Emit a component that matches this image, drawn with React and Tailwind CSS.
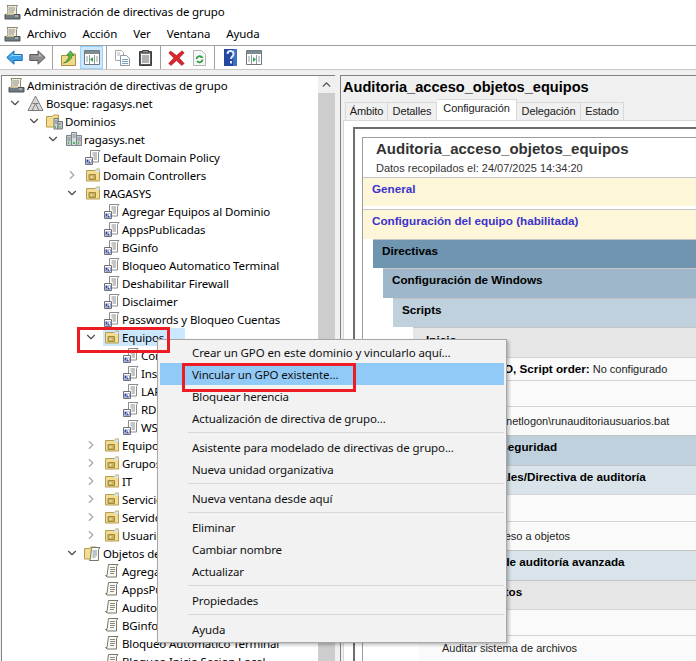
import React from "react";
import { ChevronDown, ChevronRight, ChevronUp } from "lucide-react";

const uiFont = { fontFamily: '"Noto Sans", sans-serif' };
const reportFont = { fontFamily: '"Liberation Sans", sans-serif' };

// small pictures from the MMC toolbar and the tree
const AppIcon = () => (
  <svg width="17" height="17" viewBox="0 0 17 17">
    <path d="M3 1.500h10.500l-1 2v7h-9.500l.8-2V3z" fill="#f3ecd6" stroke="#8a8a7a" />
    <path d="M5 4h6M5 6h6M5 8h5" stroke="#8f8f8f" />
    <path d="M1 10.500h15v4.500H1z" fill="#6f7b80" stroke="#4b5356" />
    <path d="M2 9.500h8v1.500H2z" fill="#c6b98a" />
    <path d="M11 12h3" stroke="#d8e0e2" />
  </svg>
);

const LinkIcon = () => (
  <svg width="16" height="16" viewBox="0 0 16 16">
    <path d="M5.500 1.500H15l-1.500 2v9.500H4.500l1-2z" fill="#fff" stroke="#8c8c8c" />
    <path d="M7.500 4h4.500M7.500 6h4.500M8.500 8h3.500M8.500 10h3.500" stroke="#8a8a8a" />
    <path d="M.5 8.500h7v7h-7z" fill="#fff" stroke="#6f7275" />
    <path d="M1.500 10.500h5v4h-5z" fill="#34449f" />
    <path d="M2.500 14l2.500-2.500M3 11h2.500v2.500" stroke="#fff" fill="none" />
  </svg>
);

const ScriptIcon = () => (
  <svg width="16" height="16" viewBox="0 0 16 16">
    <path d="M4.500 1.500H14l-1.500 2v10.500h-9.500l-1.500-1.500h1.500z" fill="#fbfaf2" stroke="#77776c" />
    <path d="M6 4.500h5M6 6.500h5M6 8.500h5M6 10.500h4" stroke="#8a8a80" />
  </svg>
);

const OuIcon = () => (
  <svg width="16" height="16" viewBox="0 0 16 16">
    <path d="M1.500 3.500h9l1-1.500h3v12h-13z" fill="#f4dc90" stroke="#b59c50" />
    <path d="M10.500 2.500h4v2.500h-4z" fill="#cfe4f4" />
    <path d="M4 7.500h6.500v5H4z" fill="#c9b25c" stroke="#a08a40" />
    <path d="M5.500 10h2" stroke="#fff" />
  </svg>
);

const ForestIcon = () => (
  <svg width="17" height="17" viewBox="0 0 17 17">
    <path d="M8.500 1L16 15.500H1z" fill="#d9d9d9" stroke="#7c7c7c" />
    <path d="M8.500 8.500L5 15.500M8.500 8.500L12 15.500M5.500 8.500h6" stroke="#7c7c7c" fill="none" />
  </svg>
);

const ServerIcon = () => (
  <svg width="16" height="16" viewBox="0 0 16 16">
    <path d="M5.500 1.500h5v13h-5z" fill="#d5dadd" stroke="#7d8589" />
    <path d="M.5 4.500h5v10h-5zM10.500 4.500h5v10h-5z" fill="#c3cacd" stroke="#7d8589" />
    <path d="M6.500 4h3M6.500 6h3M1.500 7h3M11.500 7h3M1.500 9h3M11.500 9h3" stroke="#7d8589" />
    <path d="M2 12h1M7 12h2M12 12h1" stroke="#47c04a" strokeWidth="2" />
  </svg>
);

const DomainsIcon = () => (
  <svg width="17" height="17" viewBox="0 0 17 17">
    <path d="M.5 3.500h6l1-1.500h5v12H.5z" fill="#f4dc90" stroke="#b59c50" />
    <path d="M8 5.500h4v10.500H8z" fill="#d5dadd" stroke="#6f777b" />
    <path d="M12 8.500h4.500v7.500H12z" fill="#c3cacd" stroke="#6f777b" />
    <path d="M9 8h2M9 10h2M13 11h2" stroke="#6f777b" />
    <path d="M9 14h1M13.500 14h1" stroke="#47c04a" strokeWidth="2" />
  </svg>
);

const GpoFolderIcon = () => (
  <svg width="17" height="17" viewBox="0 0 17 17">
    <path d="M.5 3.500h5l1-1.500h6v12H.5z" fill="#f4dc90" stroke="#b59c50" />
    <path d="M7.500 2.500H16l-1.500 2v11H5.500l1-2z" fill="#fbfaf2" stroke="#77776c" />
    <path d="M8.500 6h4.500M8.500 8h4.500M8.500 10h4.500M8.500 12h3" stroke="#7d8ea0" />
  </svg>
);

const BackIcon = () => (
  <svg width="17" height="15" viewBox="0 0 17 15">
    <path d="M.8 7.500L8 .8v3.700h8.200v6H8v3.700z" fill="#3ba3e8" stroke="#1b6fb0" />
    <path d="M3 7.500L7 4v2h8v-1H8" fill="#9ddcfb" />
  </svg>
);

const ForwardIcon = () => (
  <svg width="17" height="15" viewBox="0 0 17 15">
    <path d="M16.200 7.500L9 .8v3.700H.8v6H9v3.700z" fill="#8d8d8d" stroke="#5b5b5b" />
    <path d="M2 6h8V3.500l3 3z" fill="#c2c2c2" />
  </svg>
);

const UpFolderIcon = () => (
  <svg width="15" height="16" viewBox="0 0 15 16">
    <path d="M.5 5.500h5l1-1.500h8v11.500H.5z" fill="#f2d98a" stroke="#a98f45" />
    <path d="M2.500 13c2.500-1 5-3.500 5.500-7.500H6L9.500.8l3.500 4.700h-2c-.5 4-4 7-8.500 7.500z" fill="#58b947" stroke="#2f7f29" strokeWidth=".7" />
  </svg>
);

const PaneIcon = ({ arrow }) => (
  <svg width="16" height="15" viewBox="0 0 16 15">
    <path d="M.5 .5h15v14H.5z" fill="#fff" stroke="#6f7a80" />
    <path d="M1 1h14v3H1z" fill="#7f8b92" />
    <path d="M5.500 5v9M10.500 5v9" stroke="#8f9aa0" />
    <path d="M2 7h2M2 9h2M2 11h2M12 7h2M12 9h2M12 11h2" stroke="#8f9aa0" />
    {arrow === "left" ? <path d="M9 7v5L6 9.500z" fill="#2fa84f" /> : <path d="M7 7v5l3-2.500z" fill="#2fa84f" />}
  </svg>
);

const CopyIcon = () => (
  <svg width="16" height="16" viewBox="0 0 16 16">
    <path d="M.5 .5h6l2 2v8h-8z" fill="#fff" stroke="#a7a7a7" />
    <path d="M5.500 5.500h6l3 3v7h-9z" fill="#fff" stroke="#8a9aa8" />
    <path d="M7 9.500h6M7 11.500h6M7 13.500h6" stroke="#7ba0c4" />
    <path d="M2 3h3M2 5h3" stroke="#b5b5b5" />
  </svg>
);

const PasteIcon = () => (
  <svg width="13" height="16" viewBox="0 0 13 16">
    <path d="M.5 1.500h12v14H.5z" fill="#55595c" stroke="#3c3f41" />
    <path d="M2 3.500h9v10.500H2z" fill="#f6f6f6" />
    <path d="M3.500 .5h6v2.500h-6z" fill="#8a8d8f" stroke="#3c3f41" />
    <path d="M3 6h7M3 8h7M3 10h7M3 12h7" stroke="#6a6a6a" />
  </svg>
);

const DeleteIcon = () => (
  <svg width="17" height="16" viewBox="0 0 17 16">
    <path d="M2.500 1L8.500 5.500 14 .8l2.200 2-5 5.200 5 5.500-2.500 2L8.500 10.500 3 15.500l-2.300-2L5.800 8 .8 3z" fill="#d8262c" stroke="#a81c20" strokeWidth=".6" />
  </svg>
);

const RefreshIcon = () => (
  <svg width="13" height="16" viewBox="0 0 13 16">
    <path d="M.5 .5h8l4 4v11H.5z" fill="#f7f7f7" stroke="#b3b3b3" />
    <path d="M3.500 9a3 3 0 0 1 5.500-1.500M9.500 9.500a3 3 0 0 1-5.500 1.500" fill="none" stroke="#2f9e44" strokeWidth="1.800" />
    <path d="M8 5.500l2.500 2.500H7.500z" fill="#2f9e44" />
  </svg>
);

const HelpIcon = () => (
  <svg width="13" height="17" viewBox="0 0 13 17">
    <path d="M0 0h13v17H0z" fill="#24479f" />
    <path d="M9 0h4v17H9z" fill="#3f70c4" />
    <path d="M3.500 5c0-4 6-4 6 0 0 2.500-2.500 2.500-2.500 5M7 12v2.500" fill="none" stroke="#dfe9ff" strokeWidth="2" />
  </svg>
);

const Sep = () => <div className="w-px h-[23px] bg-[#a0a0a0] ml-[3px] mr-[4px]" />;

const ToolBtn = ({ children, active }) => (
  <div className={`w-[23px] h-[23px] flex items-center justify-center border ${active ? "bg-[#cce8ff] border-[#99d1ff]" : "border-transparent"}`}>
    {children}
  </div>
);

const treeRows = [
  { l: "ml-[6px]", icon: <AppIcon />, text: "Administración de directivas de grupo" },
  { l: "ml-[6px]", ch: "d", icon: <ForestIcon />, text: "Bosque: ragasys.net" },
  { l: "ml-[25px]", ch: "d", icon: <DomainsIcon />, text: "Dominios" },
  { l: "ml-[44px]", ch: "d", icon: <ServerIcon />, text: "ragasys.net" },
  { l: "ml-[63px]", ch: "n", icon: <LinkIcon />, text: "Default Domain Policy" },
  { l: "ml-[63px]", ch: "r", icon: <OuIcon />, text: "Domain Controllers" },
  { l: "ml-[63px]", ch: "d", icon: <OuIcon />, text: "RAGASYS" },
  { l: "ml-[82px]", ch: "n", icon: <LinkIcon />, text: "Agregar Equipos al Dominio" },
  { l: "ml-[82px]", ch: "n", icon: <LinkIcon />, text: "AppsPublicadas" },
  { l: "ml-[82px]", ch: "n", icon: <LinkIcon />, text: "BGinfo" },
  { l: "ml-[82px]", ch: "n", icon: <LinkIcon />, text: "Bloqueo Automatico Terminal" },
  { l: "ml-[82px]", ch: "n", icon: <LinkIcon />, text: "Deshabilitar Firewall" },
  { l: "ml-[82px]", ch: "n", icon: <LinkIcon />, text: "Disclaimer" },
  { l: "ml-[82px]", ch: "n", icon: <LinkIcon />, text: "Passwords y Bloqueo Cuentas" },
  { l: "ml-[82px]", ch: "d", icon: <OuIcon />, text: "Equipos", selected: true },
  { l: "ml-[101px]", ch: "n", icon: <LinkIcon />, text: "Configuración" },
  { l: "ml-[101px]", ch: "n", icon: <LinkIcon />, text: "Instalaciones" },
  { l: "ml-[101px]", ch: "n", icon: <LinkIcon />, text: "LAPS" },
  { l: "ml-[101px]", ch: "n", icon: <LinkIcon />, text: "RDP" },
  { l: "ml-[101px]", ch: "n", icon: <LinkIcon />, text: "WSUS" },
  { l: "ml-[82px]", ch: "r", icon: <OuIcon />, text: "Equipos" },
  { l: "ml-[82px]", ch: "r", icon: <OuIcon />, text: "Grupos" },
  { l: "ml-[82px]", ch: "r", icon: <OuIcon />, text: "IT" },
  { l: "ml-[82px]", ch: "r", icon: <OuIcon />, text: "Servicios" },
  { l: "ml-[82px]", ch: "r", icon: <OuIcon />, text: "Servidores" },
  { l: "ml-[82px]", ch: "r", icon: <OuIcon />, text: "Usuarios" },
  { l: "ml-[63px]", ch: "d", icon: <GpoFolderIcon />, text: "Objetos de directiva de grupo" },
  { l: "ml-[82px]", ch: "n", icon: <ScriptIcon />, text: "Agregar Equipos al Dominio" },
  { l: "ml-[82px]", ch: "n", icon: <ScriptIcon />, text: "AppsPublicadas" },
  { l: "ml-[82px]", ch: "n", icon: <ScriptIcon />, text: "Auditoria_acceso_objetos_equipos" },
  { l: "ml-[82px]", ch: "n", icon: <ScriptIcon />, text: "BGinfo" },
  { l: "ml-[82px]", ch: "n", icon: <ScriptIcon />, text: "Bloqueo Automatico Terminal" },
  { l: "ml-[82px]", ch: "n", icon: <ScriptIcon />, text: "Bloqueo Inicio Sesion Local" },
];

const TreeRow = ({ row }) => (
  <div className={`h-[18px] flex items-center whitespace-nowrap ${row.l}`}>
    {row.ch && (
      <div className="w-[14px] flex justify-center text-[#4d4d4d] mr-[5px]">
        {row.ch === "d" && <ChevronDown size={14} strokeWidth={2} />}
        {row.ch === "r" && <ChevronRight size={14} strokeWidth={2} className="text-[#a6a6a6]" />}
      </div>
    )}
    <div className={`h-[18px] flex items-center ${row.selected ? "bg-[#cce8ff] pr-[20px]" : ""}`}>
      <div className="w-[17px] flex justify-center">{row.icon}</div>
      <span className="ml-[1px] px-[1px] pt-[1px]">{row.text}</span>
    </div>
  </div>
);

const menuGroups = [
  ["Crear un GPO en este dominio y vincularlo aquí...", "Vincular un GPO existente...", "Bloquear herencia", "Actualización de directiva de grupo..."],
  ["Asistente para modelado de directivas de grupo...", "Nueva unidad organizativa"],
  ["Nueva ventana desde aquí"],
  ["Eliminar", "Cambiar nombre", "Actualizar"],
  ["Propiedades"],
  ["Ayuda"],
];

const Section = ({ ml, h, bg, children }) => (
  <div className={`flex items-center border-t border-[#c4c4c4] font-bold text-[11.700px] text-black ${ml} ${h} ${bg}`}>{children}</div>
);

const Row = ({ h, pl, children }) => (
  <div className={`flex items-center border-t border-[#d4d4d4] bg-[#fafafa] ml-[56px] text-[11px] text-[#222] whitespace-nowrap ${h} ${pl}`}>{children}</div>
);

const App = () => (
  <div className="relative w-[696px] h-[661px] overflow-hidden bg-[#f0f0f0] text-[11.500px] tracking-[-0.12px] text-black" style={uiFont}>
    {/* title and menu */}
    <div className="h-[24px] bg-white flex items-center pl-[4px] gap-[3px]">
      <AppIcon />
      <span>Administración de directivas de grupo</span>
    </div>
    <div className="h-[21px] bg-white flex items-center pl-[4px] border-b border-[#a0a0a0] box-content">
      <AppIcon />
      <div className="flex ml-[6px] gap-[16px] -mt-[1px]">
        <span>Archivo</span>
        <span>Acción</span>
        <span>Ver</span>
        <span>Ventana</span>
        <span>Ayuda</span>
      </div>
    </div>

    {/* toolbar */}
    <div className="h-[23px] bg-white flex items-center pl-[3px] border-b border-[#c8c8c8] box-content">
      <ToolBtn><BackIcon /></ToolBtn>
      <ToolBtn><ForwardIcon /></ToolBtn>
      <Sep />
      <ToolBtn><UpFolderIcon /></ToolBtn>
      <ToolBtn active><PaneIcon arrow="left" /></ToolBtn>
      <Sep />
      <ToolBtn><CopyIcon /></ToolBtn>
      <ToolBtn><PasteIcon /></ToolBtn>
      <Sep />
      <ToolBtn><DeleteIcon /></ToolBtn>
      <ToolBtn><RefreshIcon /></ToolBtn>
      <Sep />
      <ToolBtn><HelpIcon /></ToolBtn>
      <ToolBtn><PaneIcon arrow="right" /></ToolBtn>
    </div>

    {/* panes */}
    <div className="flex mt-[5px] h-[600px]">
      <div className="w-[334px] ml-px shrink-0 flex border-l border-t border-[#828282] bg-white overflow-hidden">
        <div className="flex-1 min-w-0 overflow-hidden">
          {treeRows.map((row, i) => (
            <TreeRow key={i} row={row} />
          ))}
        </div>
        <div className="w-[17px] shrink-0 flex flex-col bg-[#f0f0f0]">
          <div className="h-[17px] flex items-center justify-center text-[#505050]">
            <ChevronUp size={13} strokeWidth={2.500} />
          </div>
          <div className="flex-1 bg-[#cdcdcd]" />
        </div>
      </div>

      <div className="flex-1 min-w-0 ml-[5px] border-l border-t border-[#828282] bg-[#f0f0f0] overflow-hidden" style={reportFont}>
        <div className="h-[23px] flex items-center pl-[2px] pt-[1px] font-bold text-[14.600px] tracking-normal whitespace-nowrap">
          Auditoria_acceso_objetos_equipos
        </div>
        <div className="flex items-end h-[21px] pl-[4px] text-[11px] text-[#1a1a1a]">
          <div className="w-[43px] h-[18px] flex items-center justify-center border border-b-0 border-[#d9d9d9]">Ámbito</div>
          <div className="w-[49px] h-[18px] flex items-center justify-center border border-b-0 border-l-0 border-[#d9d9d9]">Detalles</div>
          <div className="w-[80px] h-[21px] pb-[3px] flex items-center justify-center border border-b-0 border-l-0 border-[#d9d9d9] bg-white">Configuración</div>
          <div className="w-[64px] h-[18px] flex items-center justify-center border border-b-0 border-l-0 border-[#d9d9d9]">Delegación</div>
          <div className="w-[43px] h-[18px] flex items-center justify-center border border-b-0 border-l-0 border-[#d9d9d9]">Estado</div>
        </div>

        {/* report */}
        <div className="ml-[2px] bg-white border-l border-t border-[#d9d9d9] pl-[9px] pt-[6px] h-[560px] tracking-normal">
          <div className="border-t-2 border-l-2 border-[#6e6e6e] pl-[7px] pt-[8px] h-[540px] bg-white">
            <div className="border-l border-t border-[#9c9c9c] w-[340px]">
              <div className="pl-[13px] pt-[2px] h-[39px]">
                <div className="font-bold text-[15px] leading-[17px] text-[#333]">Auditoria_acceso_objetos_equipos</div>
                <div className="text-[11px] leading-[16px] mt-[3px] text-[#333]">Datos recopilados el: 24/07/2025 14:34:20</div>
              </div>
              <Section ml="ml-0" h="h-[29px]" bg="bg-[#fdf6d8]"><span className="ml-[9px] -mt-[6px] text-[#3c33cc]">General</span></Section>
              <div className="h-[3px]" />
              <Section ml="ml-0" h="h-[30px]" bg="bg-[#fdf6d8]"><span className="ml-[9px] -mt-[8px] text-[#3c33cc]">Configuración del equipo (habilitada)</span></Section>
              <Section ml="ml-[10px]" h="h-[29px]" bg="bg-[#6f95b0]"><span className="ml-[9px] -mt-[6px]">Directivas</span></Section>
              <Section ml="ml-[20px]" h="h-[30px]" bg="bg-[#9fb7ca]"><span className="ml-[9px] -mt-[8px]">Configuración de Windows</span></Section>
              <Section ml="ml-[30px]" h="h-[29px]" bg="bg-[#bfd1dd]"><span className="ml-[9px] -mt-[6px]">Scripts</span></Section>
              <Section ml="ml-[50px]" h="h-[30px]" bg="bg-[#e6e6e6]"><span className="ml-[13px] -mt-[6px]">Inicio</span></Section>
              <Row h="h-[23px]" pl="pl-[22px]"><b className="text-[11.700px] text-black">For this GPO, Script order:</b><span className="ml-[3px]">No configurado</span></Row>
              <Row h="h-[26px]" pl="pl-[23px]" />
              <Row h="h-[29px]" pl="pl-[21px]">\\ragasys.net\netlogon\runauditoriausuarios.bat</Row>
              <Section ml="ml-[30px]" h="h-[30px]" bg="bg-[#bfd1dd]"><span className="ml-[9px] -mt-[8px]">Configuración de seguridad</span></Section>
              <Section ml="ml-[40px]" h="h-[29px]" bg="bg-[#d9e4ea]"><span className="ml-[22px] -mt-[6px]">Directivas locales/Directiva de auditoría</span></Section>
              <Row h="h-[27px]" pl="pl-[23px]" />
              <Row h="h-[29px]" pl="pl-[19px]">Auditar el acceso a objetos</Row>
              <Section ml="ml-[30px]" h="h-[30px]" bg="bg-[#d9e4ea]"><span className="ml-[27px] -mt-[8px]">Configuración de auditoría avanzada</span></Section>
              <Section ml="ml-[50px]" h="h-[29px]" bg="bg-[#e6e6e6]"><span className="ml-[13px] -mt-[6px]">Acceso a objetos</span></Section>
              <Row h="h-[26px]" pl="pl-[23px]" />
              <Row h="h-[26px]" pl="pl-[23px]">Auditar sistema de archivos</Row>
            </div>
          </div>
        </div>
      </div>
    </div>

    {/* context menu */}
    <div className="absolute left-[157px] top-[339px] w-[350px] h-[304px] bg-[#f2f2f2] border border-[#a6a6a6] py-px px-[2px] shadow-[2px_2px_3px_rgba(0,0,0,0.25)]">
      {menuGroups.map((group, gi) => (
        <div key={gi}>
          {gi > 0 && (
            <div className="h-[7px] flex items-center pl-[28px]">
              <div className="h-px w-full bg-[#d7d7d7]" />
            </div>
          )}
          {group.map((item) => (
            <div key={item} className={`h-[22px] flex items-center pl-[32px] pt-[1px] text-[#111] ${item === "Vincular un GPO existente..." ? "bg-[#91c9f7]" : ""}`}>
              {item}
            </div>
          ))}
        </div>
      ))}
    </div>

    {/* red callouts */}
    <div className="absolute left-[77px] top-[327px] w-[93px] h-[26px] border-[3px] border-[#ed1c24]" />
    <div className="absolute left-[182px] top-[363px] w-[174px] h-[29px] border-[3px] border-[#ed1c24]" />
  </div>
);

export default App;
